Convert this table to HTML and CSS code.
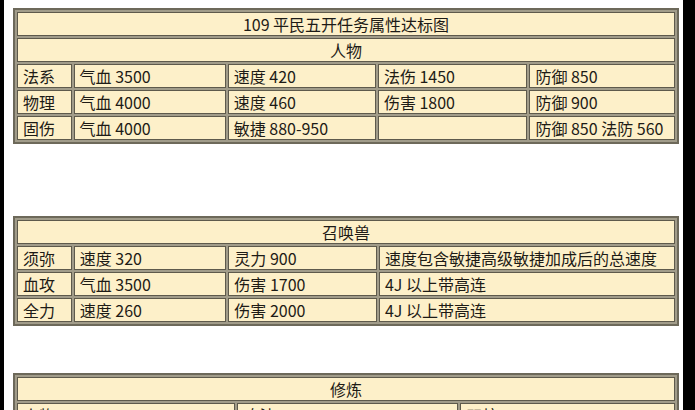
FILE: index.html
```html
<!DOCTYPE html>
<html lang="zh">
<head>
<meta charset="utf-8">
<title>109 平民五开任务属性达标图</title>
<link rel="stylesheet" href="styles.css">
</head>
<body>
<div class="frame">
  <table class="grid grid-person">
    <colgroup>
      <col class="c-name"><col class="c-a"><col class="c-b"><col class="c-c"><col class="c-d">
    </colgroup>
    <tr><td class="head" colspan="5">109 平民五开任务属性达标图</td></tr>
    <tr><td class="head" colspan="5">人物</td></tr>
    <tr><td>法系</td><td>气血 3500</td><td>速度 420</td><td>法伤 1450</td><td>防御 850</td></tr>
    <tr><td>物理</td><td>气血 4000</td><td>速度 460</td><td>伤害 1800</td><td>防御 900</td></tr>
    <tr><td>固伤</td><td>气血 4000</td><td>敏捷 880-950</td><td></td><td>防御 850 法防 560</td></tr>
  </table>

  <table class="grid grid-pet">
    <colgroup>
      <col class="c-name"><col class="c-a"><col class="c-b"><col class="c-wide">
    </colgroup>
    <tr><td class="head" colspan="4">召唤兽</td></tr>
    <tr><td>须弥</td><td>速度 320</td><td>灵力 900</td><td>速度包含敏捷高级敏捷加成后的总速度</td></tr>
    <tr><td>血攻</td><td>气血 3500</td><td>伤害 1700</td><td>4J 以上带高连</td></tr>
    <tr><td>全力</td><td>速度 260</td><td>伤害 2000</td><td>4J 以上带高连</td></tr>
  </table>

  <table class="grid grid-train">
    <colgroup>
      <col class="t-a"><col class="t-b"><col class="t-c">
    </colgroup>
    <tr><td class="head" colspan="3">修炼</td></tr>
    <tr><td>人物</td><td>攻法 20</td><td>双抗 20</td></tr>
  </table>
</div>
</body>
</html>
```
FILE: styles.css
```css
html, body {
  margin: 0;
  padding: 0;
  background: #000;
  height: 410px;
  overflow: hidden;
}

.frame {
  margin-left: 4px;
  width: 679px;
  height: 410px;
  background: #fff;
  padding: 8px 0 0 9px;
  box-sizing: border-box;
  overflow: hidden;
}

.grid {
  width: 666px;
  table-layout: fixed;
  border-collapse: separate;
  border-spacing: 2px;
  background: #a19c8a;
  border: 2px solid #6d695a;
  font-family: "Noto Sans CJK SC", "DejaVu Sans", sans-serif;
  font-size: 16px;
  color: #1d1b16;
}

.grid td {
  background: #fdf0c9;
  border: 1px solid #5e5a4c;
  height: 22px;
  line-height: 22px;
  padding: 0 5px;
  white-space: nowrap;
  overflow: hidden;
}

.grid td.head {
  text-align: center;
}

.grid-pet {
  margin-top: 72px;
}

.grid-train {
  margin-top: 47px;
}

.c-name { width: 8.4%; }
.c-a { width: 23.4%; }
.c-b { width: 22.8%; }
.c-c { width: 23%; }
.c-d { width: 22.4%; }
.c-wide { width: 45.4%; }

.t-a { width: 33.4%; }
.t-b { width: 33.8%; }
.t-c { width: 32.8%; }
```
